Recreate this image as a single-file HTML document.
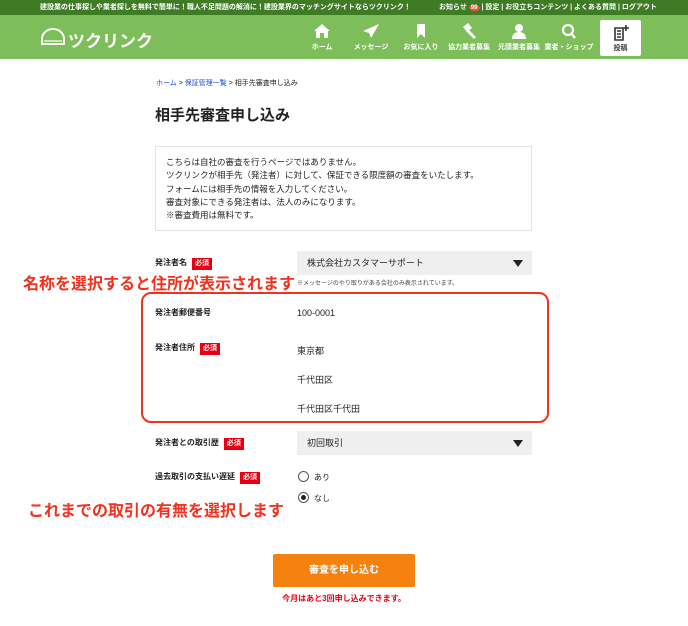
<!DOCTYPE html><html><head><meta charset="utf-8"><style>
*{margin:0;padding:0;box-sizing:border-box}
body{width:688px;height:626px;position:relative;background:#fff;font-family:"Liberation Sans","Noto Sans CJK JP",sans-serif;color:#222;overflow:hidden}
.a{position:absolute;white-space:nowrap}
.top{left:0;top:0;width:688px;height:15px;background:#3f7b25;color:#fff;font-size:7px;font-weight:bold;line-height:15px}
.nav{left:0;top:15px;width:688px;height:44px;background:#7dbe5b}
.ni{position:absolute;top:8px;width:50px;text-align:center;color:#fff;font-size:7px;font-weight:bold}
.ni svg{display:block;margin:0 auto 3px}
.lbl{font-size:8px;font-weight:bold}
.req{display:inline-block;background:#e60012;color:#fff;font-size:7px;padding:1px 3px;margin-left:5px;line-height:10px}
.sel{background:#efefef;font-size:9px;padding-left:10px;line-height:24px;height:24px;width:235px;left:297px}
.sel:after{content:"";position:absolute;right:9px;top:9px;border-left:5px solid transparent;border-right:5px solid transparent;border-top:7px solid #222}
.v{font-size:9px;left:297px}
.ann{color:#f0321e;font-size:16px;font-weight:bold}
.rad{width:11px;height:11px;border:1px solid #555;border-radius:50%;left:298px}
</style></head><body>
<div class="a top"><span style="margin-left:40px">建設業の仕事探しや業者探しを無料で簡単に！職人不足問題の解消に！建設業界のマッチングサイトならツクリンク！</span><span style="position:absolute;left:439px">お知らせ <span style="background:#e53;border-radius:50%;padding:0 2px;font-size:6px">99</span> | 設定 | お役立ちコンテンツ | よくある質問 | ログアウト</span></div>
<div class="a nav">
<svg style="position:absolute;left:40px;top:12px" width="26" height="20" viewBox="0 0 26 20"><path d="M2 17 V12 A11 10 0 0 1 24 12 V17 Z M1 17 H25" fill="none" stroke="#fff" stroke-width="2"/><path d="M4 14 H22" stroke="#fff" stroke-width="1.3"/></svg>
<div class="a" style="left:68px;top:12px;color:#fff;font-size:17px;font-weight:bold;letter-spacing:0">ツクリンク</div>
<div class="ni" style="left:297px"><svg width="18" height="16" viewBox="0 0 18 16"><path d="M9 1 L1 8 H3 V15 H7 V10 H11 V15 H15 V8 H17 Z" fill="#fff"/></svg>ホーム</div>
<div class="ni" style="left:346px"><svg width="18" height="16" viewBox="0 0 18 16"><path d="M17 1 L1 8 L7 10 L9 15 Z" fill="#fff"/></svg>メッセージ</div>
<div class="ni" style="left:396px"><svg width="18" height="16" viewBox="0 0 18 16"><path d="M5 1 H13 V15 L9 11 L5 15 Z" fill="#fff"/></svg>お気に入り</div>
<div class="ni" style="left:444px"><svg width="18" height="16" viewBox="0 0 18 16"><path d="M3 4 L8 0 L12 5 L7 9 Z M9 7 L16 14 L14 16 L7 9 Z" fill="#fff"/></svg>協力業者募集</div>
<div class="ni" style="left:494px"><svg width="18" height="16" viewBox="0 0 18 16"><circle cx="9" cy="5" r="4" fill="#fff"/><path d="M2 16 Q2 9 9 9 Q16 9 16 16 Z" fill="#fff"/></svg>元請業者募集</div>
<div class="ni" style="left:544px"><svg width="18" height="16" viewBox="0 0 18 16"><circle cx="8" cy="7" r="5" fill="none" stroke="#fff" stroke-width="2.2"/><path d="M11 10 L15 15" stroke="#fff" stroke-width="2.5"/></svg>業者・ショップ</div>
<div class="a" style="left:600px;top:5px;width:41px;height:36px;background:#fff;border-radius:2px;text-align:center;font-size:7px;font-weight:bold;color:#333"><svg style="display:block;margin:5px auto 2px" width="18" height="16" viewBox="0 0 18 16"><path d="M3 3 H11 V15 H3 Z M5 6 H9 M5 9 H9 M5 12 H9 M14 0 V6 M11 3 H17" fill="none" stroke="#333" stroke-width="1.6"/></svg>投稿</div>
</div>
<div class="a" style="left:156px;top:78px;font-size:7px"><span style="color:#1a4dd6">ホーム</span> &gt; <span style="color:#1a4dd6">保証管理一覧</span> &gt; 相手先審査申し込み</div>
<div class="a" style="left:155px;top:104px;font-size:15px;font-weight:bold">相手先審査申し込み</div>
<div class="a" style="left:155px;top:146px;width:377px;height:85px;border:1px solid #e3e3e3;padding:9px 10px;font-size:8.5px;line-height:13.3px">こちらは自社の審査を行うページではありません。<br>ツクリンクが相手先（発注者）に対して、保証できる限度額の審査をいたします。<br>フォームには相手先の情報を入力してください。<br>審査対象にできる発注者は、法人のみになります。<br>※審査費用は無料です。</div>
<div class="a lbl" style="left:155px;top:257px">発注者名<span class="req">必須</span></div>
<div class="a sel" style="top:251px">株式会社カスタマーサポート</div>
<div class="a" style="left:297px;top:278px;font-size:6px;color:#444">※メッセージのやり取りがある会社のみ表示されています。</div>
<div class="a ann" style="left:23px;top:270px">名称を選択すると住所が表示されます</div>
<div class="a" style="left:141px;top:292px;width:408px;height:131px;border:2px solid #f0321e;border-radius:10px"></div>
<div class="a lbl" style="left:155px;top:307px">発注者郵便番号</div>
<div class="a v" style="top:308px">100-0001</div>
<div class="a lbl" style="left:155px;top:342px">発注者住所<span class="req">必須</span></div>
<div class="a v" style="top:344px">東京都</div>
<div class="a v" style="top:373px">千代田区</div>
<div class="a v" style="top:402px">千代田区千代田</div>
<div class="a lbl" style="left:155px;top:437px">発注者との取引歴<span class="req">必須</span></div>
<div class="a sel" style="top:431px">初回取引</div>
<div class="a lbl" style="left:155px;top:471px">過去取引の支払い遅延<span class="req">必須</span></div>
<div class="a rad" style="top:471px"></div><div class="a" style="left:314px;top:472px;font-size:8px">あり</div>
<div class="a rad" style="top:492px"><div style="width:5px;height:5px;background:#222;border-radius:50%;margin:2px"></div></div><div class="a" style="left:314px;top:493px;font-size:8px">なし</div>
<div class="a ann" style="left:28px;top:497px">これまでの取引の有無を選択します</div>
<div class="a" style="left:273px;top:554px;width:142px;height:33px;background:#f5820f;border-radius:2px;color:#fff;font-size:10px;font-weight:bold;text-align:center;line-height:33px">審査を申し込む</div>
<div class="a" style="left:244px;top:593px;width:200px;text-align:center;color:#e60012;font-size:8px;font-weight:bold">今月はあと3回申し込みできます。</div>
</body></html>
